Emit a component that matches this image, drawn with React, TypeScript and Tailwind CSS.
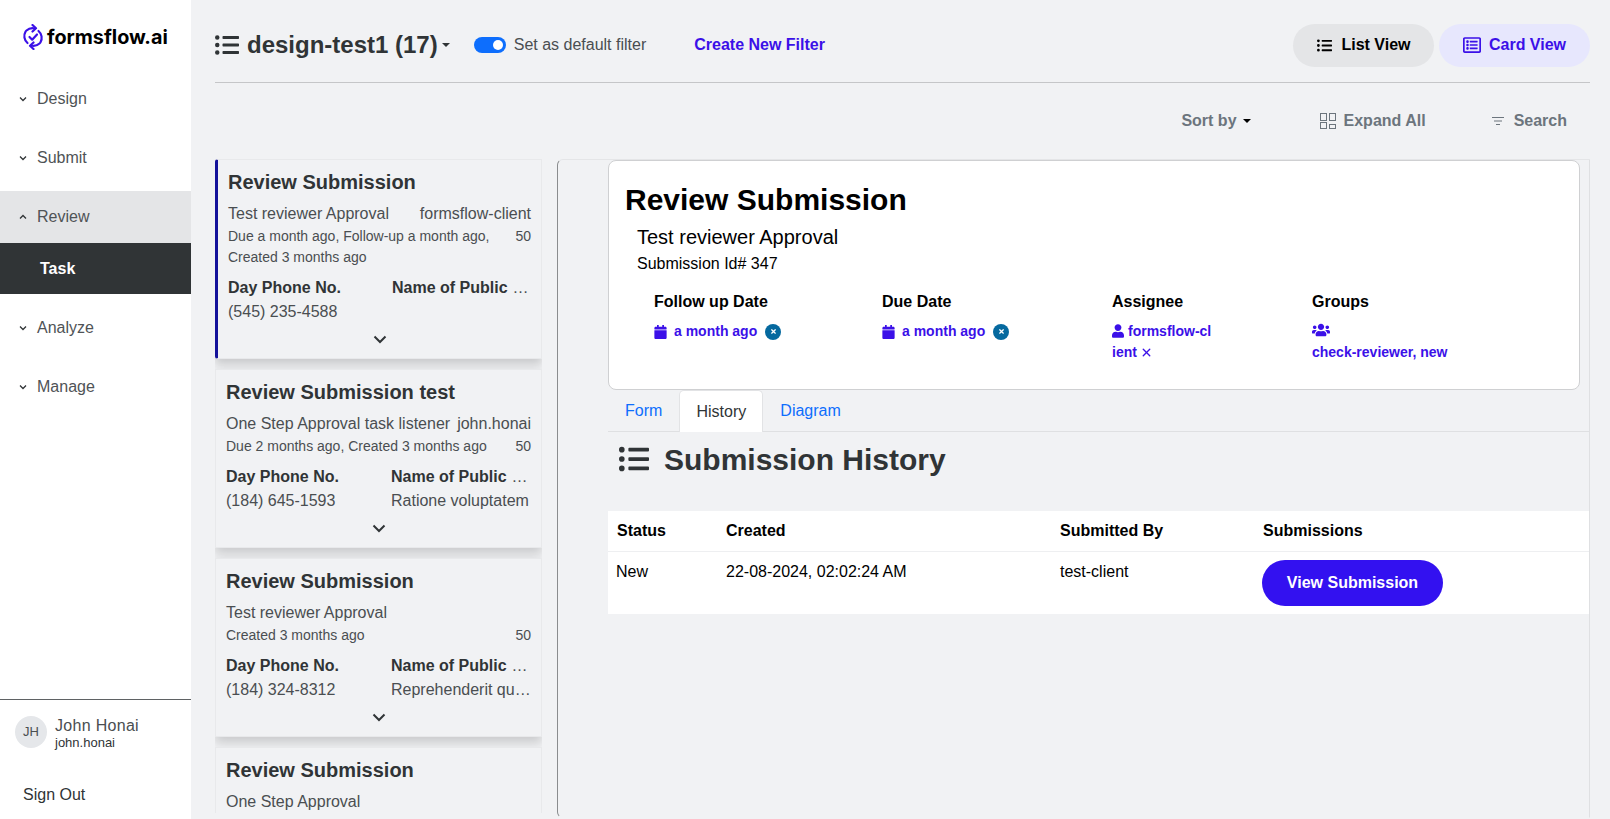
import React from "react";
import { FaListUl, FaRegListAlt, FaCalendar, FaUser, FaUsers, FaTimes } from "react-icons/fa";
import { LuX } from "react-icons/lu";

const font = { fontFamily: '"Liberation Sans", Arial, sans-serif' };

function Chev({ up }: { up?: boolean }) {
  return (
    <svg width="8" height="6" viewBox="0 0 8 6" fill="none" stroke="#303436" strokeWidth="1.3" className="mr-[10px] shrink-0">
      <path d={up ? "M1 4.5L4 1.5l3 3" : "M1 1.5l3 3 3-3"} />
    </svg>
  );
}

function NavItem({ label, open, active }: { label: string; open?: boolean; active?: boolean }) {
  return (
    <div className={`flex h-[52px] items-center pl-[19px] text-[16px] text-[#4f5356] ${active ? "bg-[#e4e5e7]" : ""}`}>
      <Chev up={open} />
      {label}
    </div>
  );
}

function Caret({ color = "#303436" }: { color?: string }) {
  return <span className="inline-block w-0 h-0 border-x-[4px] border-x-transparent border-t-[4px]" style={{ borderTopColor: color }} />;
}

function TaskCard(p: { title: string; sub: string; right?: string; meta: string; meta2?: string; phone: string; pub?: string; active?: boolean }) {
  return (
    <div className={`shrink-0 w-[327px] bg-[#f1f2f4] border border-[#e8e9eb] shadow-[0_6px_10px_rgba(0,0,0,0.16)] pr-[10px] ${p.active ? "border-l-[3px] border-l-[#14129a] pl-[10px] rounded-l-[3px] h-[200px] pt-[9px]" : "pl-[10px] h-[179px] pt-[9px]"}`}>
      <div className="text-[20px] leading-[26px] font-bold text-[#303436]">{p.title}</div>
      <div className="mt-[8px] flex justify-between text-[16px] leading-[22px] text-[#4a4e51]">
        <span>{p.sub}</span>
        {p.right && <span>{p.right}</span>}
      </div>
      <div className="mt-[1px] flex justify-between text-[14px] leading-[21px] text-[#4a4e51]">
        <span className={p.meta2 ? "w-[265px] whitespace-nowrap" : ""}>{p.meta}</span>
        <span>50</span>
      </div>
      {p.meta2 && <div className="text-[14px] leading-[21px] text-[#4a4e51]">{p.meta2}</div>}
      <div className={`mt-[8px] grid text-[16px] leading-[24px] text-[#4a4e51] ${p.active ? "grid-cols-[164px_1fr]" : "grid-cols-[165px_1fr]"}`}>
        <b className="text-[#303436]">Day Phone No.</b>
        <span className="whitespace-nowrap"><b className="text-[#303436]">Name of Public</b><span className="ml-[5px] text-[#4a4e51]">…</span></span>
        <span>{p.phone}</span>
        <span className="whitespace-nowrap">{p.pub}</span>
      </div>
      <div className="flex justify-center items-center h-[18px] mt-[6px]">
        <svg width="14" height="9" viewBox="0 0 14 9" fill="none" stroke="#303436" strokeWidth="2">
          <path d="M1.5 1.5L7 7l5.5-5.5" />
        </svg>
      </div>
    </div>
  );
}

function Chip({ text }: { text: string }) {
  return (
    <div className="flex items-center text-[14px] font-bold text-[#3b10e8] whitespace-nowrap">
      <FaCalendar className="w-[13px] h-[14px] mr-[7px]" />
      <span>{text}</span>
      <span className="ml-[8px] w-[16px] h-[16px] rounded-full bg-[#05699f] text-white flex items-center justify-center">
        <FaTimes className="w-[7px] h-[7px]" />
      </span>
    </div>
  );
}

export default function App() {
  return (
    <div className="flex h-[819px] w-[1610px] overflow-hidden bg-[#f1f2f4]" style={font}>
      <aside className="w-[191px] shrink-0 bg-white flex flex-col">
        <div className="h-[72px] pt-[2px] flex items-center pl-[22px]">
          <svg width="22" height="26" viewBox="0 0 22 26" fill="none" stroke="#3b10e8" strokeWidth="2.2" strokeLinecap="round" strokeLinejoin="round">
            <path d="M4.5 6.5A9 9 0 0 1 13 4.5" />
            <path d="M10.5 1l3.5 3.3L10.5 7.5" />
            <path d="M17.5 19.5A9 9 0 0 1 9 21.5" />
            <path d="M11.5 18.5L8 21.7l3.5 3.3" />
            <path d="M3.6 7.5A9 9 0 0 0 5.5 19" />
            <path d="M18.4 18.5A9 9 0 0 0 16.5 7" />
            <path d="M7.5 13l2.7 2.7L15 10.5" />
          </svg>
          <span className="ml-[3px] mt-[1px] text-[19.8px] font-bold text-black" style={{ fontFamily: "Inter, sans-serif" }}>formsflow.ai</span>
        </div>
        <div className="mt-[1px]">
          <NavItem label="Design" />
        </div>
        <div className="mt-[7px]">
          <NavItem label="Submit" />
        </div>
        <div className="mt-[7px]">
          <NavItem label="Review" open active />
        </div>
        <div className="h-[51px] bg-[#303436] flex items-center pl-[40px] text-[16px] font-bold text-white">Task</div>
        <div className="mt-[8px]">
          <NavItem label="Analyze" />
        </div>
        <div className="mt-[7px]">
          <NavItem label="Manage" />
        </div>
        <div className="mt-auto border-t border-[#5f6264]">
          <div className="flex items-start pl-[15px] mt-[16px]">
            <div className="w-[32px] h-[32px] rounded-full bg-[#e5e7ea] flex items-center justify-center text-[13px] text-[#4a4e51]">JH</div>
            <div className="ml-[8px]">
              <div className="text-[16px] leading-[19px] text-[#4a4e51] tracking-[0.3px]">John Honai</div>
              <div className="text-[13px] leading-[16px] text-[#303436]">john.honai</div>
            </div>
          </div>
          <div className="pl-[23px] mt-[34px] mb-[14px] text-[16px] leading-[20px] text-[#303436]">Sign Out</div>
        </div>
      </aside>

      <main className="flex-1 flex flex-col min-w-0 pl-[24px] pr-[20px]">
        <header className="h-[83px] pt-[8px] shrink-0 flex items-center border-b border-[#c5c6c8]">
          <FaListUl className="w-[24px] h-[24px] text-[#303436]" />
          <span className="ml-[8px] text-[24px] font-bold text-[#303436]">design-test1 (17)</span>
          <span className="ml-[4px] flex"><Caret /></span>
          <span className="ml-[24px] w-[32px] h-[16px] rounded-full bg-[#0d6efd] flex items-center justify-end pr-[3px]">
            <span className="w-[10px] h-[10px] rounded-full bg-white" />
          </span>
          <span className="ml-[8px] text-[16px] text-[#4a4e51]">Set as default filter</span>
          <span className="ml-[48px] text-[16px] font-bold text-[#3b10e8]">Create New Filter</span>
          <div className="ml-auto flex gap-[5px]">
            <div className="w-[141px] h-[43px] rounded-full bg-[#e4e5e7] flex items-center justify-center text-[16px] font-bold text-black">
              <FaListUl className="w-[15px] h-[15px] mr-[9px] ml-[1px]" />List View
            </div>
            <div className="w-[151px] h-[43px] rounded-full bg-[#e7e7fd] flex items-center justify-center text-[16px] font-bold text-[#3b10e8]">
              <FaRegListAlt className="w-[18px] h-[18px] mr-[8px]" />Card View
            </div>
          </div>
        </header>

        <div className="h-[76px] shrink-0 flex items-center text-[16px] font-bold text-[#6c757d]">
          <span className="ml-auto flex items-center gap-[6px]">Sort by <Caret color="#000" /></span>
          <span className="ml-[69px] flex items-center gap-[8px]">
            <svg width="16" height="16" viewBox="0 0 16 16" fill="none" stroke="#6c757d" strokeWidth="1"><rect x=".5" y=".5" width="6" height="7" /><rect x="9.5" y=".5" width="6" height="7" /><rect x=".5" y="9.5" width="6" height="6" /><rect x="9.5" y="11.5" width="6" height="4" /></svg>
            Expand All
          </span>
          <span className="ml-[65px] mr-[23px] flex items-center gap-[9px]">
            <svg width="14" height="10" viewBox="0 0 14 10" fill="none" stroke="#6c757d" strokeWidth="1"><path d="M1 1.5h12M3 5h8M5 8.5h4" /></svg>
            Search
          </span>
        </div>

        <div className="flex-1 min-h-0 flex">
          <div className="w-[327px] shrink-0 flex flex-col gap-[10px] overflow-hidden h-[654px]">
            <TaskCard active title="Review Submission" sub="Test reviewer Approval" right="formsflow-client" meta="Due a month ago, Follow-up a month ago," meta2="Created 3 months ago" phone="(545) 235-4588" />
            <TaskCard title="Review Submission test" sub="One Step Approval task listener" right="john.honai" meta="Due 2 months ago, Created 3 months ago" phone="(184) 645-1593" pub="Ratione voluptatem" />
            <TaskCard title="Review Submission" sub="Test reviewer Approval" meta="Created 3 months ago" phone="(184) 324-8312" pub="Reprehenderit qu…" />
            <div className="shrink-0 w-[327px] h-[179px] bg-[#f1f2f4] border border-[#e8e9eb] pl-[10px] pr-[10px] pt-[9px]">
              <div className="text-[20px] leading-[26px] font-bold text-[#303436]">Review Submission</div>
              <div className="mt-[8px] text-[16px] leading-[22px] text-[#4a4e51]">One Step Approval</div>
            </div>
          </div>
          <section className="ml-[15px] flex-1 min-w-0 border-l border-r border-t border-b border-l-[#8a8c8e] border-r-[#dfe0e2] border-t-[#e4e5e7] border-b-transparent rounded-tl-[6px] rounded-bl-[6px] pl-[50px] mb-[1px]">
            <div className="w-[972px] h-[230px] bg-white rounded-[8px] border border-[#cfd0d2] pl-[16px] pt-[21px] text-black">
              <div className="text-[30px] leading-[36px] font-bold">Review Submission</div>
              <div className="ml-[12px] mt-[5px] text-[20px] leading-[28px]">Test reviewer Approval</div>
              <div className="ml-[12px] mt-[1px] text-[16px] leading-[24px]">Submission Id# 347</div>
              <div className="ml-[29px] mt-[14px] flex">
                <div className="w-[228px]">
                  <div className="text-[16px] font-bold leading-[24px]">Follow up Date</div>
                  <div className="mt-[7px]"><Chip text="a month ago" /></div>
                </div>
                <div className="w-[230px]">
                  <div className="text-[16px] font-bold leading-[24px]">Due Date</div>
                  <div className="mt-[7px]"><Chip text="a month ago" /></div>
                </div>
                <div className="w-[200px]">
                  <div className="text-[16px] font-bold leading-[24px]">Assignee</div>
                  <div className="mt-[7px] w-[102px] text-[14px] leading-[21px] font-bold text-[#3b10e8] break-all">
                    <FaUser className="inline w-[12px] h-[14px] mr-[4px] align-[-2px]" />formsflow-client <LuX className="inline w-[13px] h-[13px] align-[-2px] -ml-[1px]" strokeWidth={2.5} />
                  </div>
                </div>
                <div>
                  <div className="text-[16px] font-bold leading-[24px]">Groups</div>
                  <div className="mt-[7px] text-[14px] leading-[21px] font-bold text-[#3b10e8]">
                    <FaUsers className="block w-[18px] h-[18px]" />
                    <span className="block mt-[3px]">check-reviewer, new</span>
                  </div>
                </div>
              </div>
            </div>
            <nav className="h-[42px] flex border-b border-[#dfe0e2] text-[16px] text-[#0d6efd]">
              <div className="px-[17px] flex items-center">Form</div>
              <div className="w-[84px] h-[42px] bg-white rounded-t-[5px] border border-b-0 border-[#e2e3e5] flex items-center justify-center text-[#303436]">History</div>
              <div className="px-[17px] flex items-center">Diagram</div>
            </nav>
            <div className="h-[79px] flex items-start pt-[10px] pl-[11px] text-[30px] font-bold leading-[36px] text-[#303436]">
              <FaListUl className="w-[30px] h-[30px] mt-[2px]" />
              <span className="ml-[15px]">Submission History</span>
            </div>
            <table className="w-full bg-white text-[16px] text-black border-collapse">
              <thead>
                <tr className="h-[40px] border-b border-[#eeeff1]">
                  <th className="text-left font-bold pl-[9px] w-[118px]">Status</th>
                  <th className="text-left font-bold w-[334px]">Created</th>
                  <th className="text-left font-bold w-[202px]">Submitted By</th>
                  <th className="text-left font-bold pl-[1px]">Submissions</th>
                </tr>
              </thead>
              <tbody>
                <tr className="h-[63px]">
                  <td className="align-top pl-[8px] pt-[8px]">New</td>
                  <td className="align-top pt-[8px]">22-08-2024, 02:02:24 AM</td>
                  <td className="align-top pt-[8px]">test-client</td>
                  <td className="align-top pt-[8px]">
                    <span className="inline-flex w-[181px] h-[46px] items-center justify-center rounded-full bg-[#3311f0] text-white font-bold">View Submission</span>
                  </td>
                </tr>
              </tbody>
            </table>
          </section>
        </div>
      </main>
    </div>
  );
}
